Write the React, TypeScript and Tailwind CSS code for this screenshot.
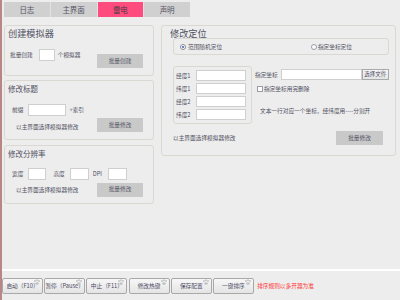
import React from "react";

const Paw = () => (
  <svg className="absolute right-[1px] top-[0px]" width="8" height="7" viewBox="0 0 8 7">
    <circle cx="2" cy="2" r="1" fill="#c4c4c4" />
    <circle cx="4" cy="1.2" r="1" fill="#c4c4c4" />
    <circle cx="6" cy="2" r="1" fill="#c4c4c4" />
    <ellipse cx="4" cy="4.6" rx="1.8" ry="1.4" fill="#c4c4c4" />
  </svg>
);

const GrayBtn = ({ label, w = "w-[46px]" }: { label: string; w?: string }) => (
  <div className={`${w} h-[14px] bg-[#c9c9c9] flex items-center justify-center text-[5.7px] text-[#555566]`}>{label}</div>
);

const Input = ({ w }: { w: string }) => (
  <div className={`${w} h-[12px] bg-white border border-[#cfcfcf]`} />
);

const Small = ({ children, className = "" }: { children: React.ReactNode; className?: string }) => (
  <span className={`text-[5.7px] leading-[8px] whitespace-nowrap ${className}`}>{children}</span>
);

const Title = ({ children, className = "" }: { children: React.ReactNode; className?: string }) => (
  <div className={`leading-[9px] mt-[3px] whitespace-nowrap ${className}`}>{children}</div>
);

const BottomBtn = ({ label }: { label: string }) => (
  <div className="relative w-[41px] h-[16px] border border-[#a9a9a9] rounded-[2px] bg-gradient-to-b from-[#f7f7f7] to-[#e4e4e4] flex items-center justify-center">
    <Paw />
    <span className="text-[5.7px] text-[#4b4b66] whitespace-nowrap">{label}</span>
  </div>
);

export default function App() {
  return (
    <div
      className="w-[400px] h-[300px] bg-[#ededed] border-l-2 border-[#b98585] flex flex-col overflow-hidden text-[#505062]"
      style={{ fontFamily: '"Noto Sans CJK SC", "Noto Sans", sans-serif' }}
    >
      {/* Tabs */}
      <div className="mt-[2px] ml-[2px] flex gap-[1px] h-[15px] w-[186px] bg-[#e2e2e2]">
        {["日志", "主界面", "雷电", "声明"].map((t) => (
          <div
            key={t}
            className={`w-[46px] h-full flex items-center justify-center text-[7.5px] ${
              t === "雷电" ? "bg-[#ff4c7e] text-[#4a3a44]" : "bg-[#d0d0d0] text-[#555566]"
            }`}
          >
            {t}
          </div>
        ))}
      </div>

      {/* Content */}
      <div className="mt-[8px] flex items-start">
        {/* Left column */}
        <div className="ml-[2px] w-[150px] flex flex-col">
          {/* G1 */}
          <div className="h-[51px] border border-[#d9d9d1] rounded-[3px] flex flex-col">
            <Title className="ml-[3px] text-[9.2px]">创建模拟器</Title>
            <div className="flex items-start">
              <div className="ml-[5px] mt-[11px] flex items-center h-[12px]">
                <Small>批量创建</Small>
                <div className="ml-[6px]">
                  <Input w="w-[16px]" />
                </div>
                <Small className="ml-[3px]">个模拟器</Small>
              </div>
              <div className="ml-auto mr-[10px] mt-[16px]">
                <GrayBtn label="批量创建" />
              </div>
            </div>
          </div>

          {/* G2 */}
          <div className="mt-[4px] h-[60px] border border-[#d9d9d1] rounded-[3px] flex flex-col">
            <Title className="ml-[3px] text-[7.5px]">修改标题</Title>
            <div className="ml-[7px] mt-[11px] flex items-center h-[12px]">
              <Small>前缀</Small>
              <div className="ml-[5px]">
                <Input w="w-[38px]" />
              </div>
              <Small className="ml-[3px]">+索引</Small>
            </div>
            <div className="mt-[2px] flex items-center h-[14px]">
              <Small className="ml-[11px] pt-[3px]">以主界面选择模拟器修改</Small>
              <div className="ml-auto mr-[10px]">
                <GrayBtn label="批量修改" />
              </div>
            </div>
          </div>

          {/* G3 */}
          <div className="mt-[5px] h-[59px] border border-[#d9d9d1] rounded-[3px] flex flex-col">
            <Title className="ml-[3px] text-[7.5px]">修改分辨率</Title>
            <div className="ml-[7px] mt-[10px] flex items-center h-[12px]">
              <Small>宽度</Small>
              <div className="ml-[5px]">
                <Input w="w-[18px]" />
              </div>
              <Small className="ml-[7px]">高度</Small>
              <div className="ml-[5px]">
                <Input w="w-[19px]" />
              </div>
              <Small className="ml-[4px]">DPI</Small>
              <div className="ml-[6px]">
                <Input w="w-[19px]" />
              </div>
            </div>
            <div className="mt-[2px] flex items-center h-[15px]">
              <Small className="ml-[11px] pt-[1px]">以主界面选择模拟器修改</Small>
              <div className="ml-auto mr-[10px]">
                <GrayBtn label="批量修改" />
              </div>
            </div>
          </div>
        </div>

        {/* Right column */}
        <div className="ml-[7px] w-[235px] h-[131px] border border-[#d9d9d1] rounded-[3px] flex flex-col">
          <Title className="ml-[8px] text-[9.2px]">修改定位</Title>
          {/* radio box */}
          <div className="ml-[11px] w-[216px] h-[17px] border border-[#d9d9d1] rounded-[3px] flex items-center">
            <div className="ml-[6px] w-[6px] h-[6px] rounded-full border border-[#8a8a9a] bg-white flex items-center justify-center">
              <div className="w-[2px] h-[2px] rounded-full bg-[#3b5bb8]" />
            </div>
            <Small className="ml-[2px]">范围随机定位</Small>
            <div className="ml-auto flex items-center mr-[36px]">
              <div className="w-[6px] h-[6px] rounded-full border border-[#9a9aa8] bg-white" />
              <Small className="ml-[1px]">指定坐标定位</Small>
            </div>
          </div>

          {/* middle */}
          <div className="mt-[11px] flex items-start">
            <div className="ml-[11px] w-[79px] h-[58px] border border-[#d9d9d1] rounded-[3px] flex flex-col gap-[2px] pt-[3px]">
              {["经度1", "纬度1", "经度2", "纬度2"].map((l) => (
                <div key={l} className="flex items-center h-[11px]">
                  <Small className="ml-[2px] w-[20px]">{l}</Small>
                  <div className="w-[50px] h-[11px] bg-white border border-[#cfcfcf]" />
                </div>
              ))}
            </div>
            <div className="ml-[3px] flex flex-col">
              <div className="mt-[3px] flex items-center h-[11px]">
                <Small>指定坐标</Small>
                <div className="ml-[3px] w-[81px] h-[11px] bg-white border border-[#cfcfcf]" />
                <div className="relative w-[27px] h-[11px] border border-[#a9a9a9] bg-gradient-to-b from-[#f7f7f7] to-[#e4e4e4] flex items-center justify-center">
                  <Paw />
                  <span className="text-[5.5px] text-[#4b4b66] whitespace-nowrap">选择文件</span>
                </div>
              </div>
              <div className="mt-[5px] flex items-center h-[7px]">
                <div className="ml-[2px] w-[6px] h-[6px] border border-[#9a9aa8] bg-white" />
                <Small className="ml-[1px]">指定坐标用完删除</Small>
              </div>
              <Small className="mt-[15px] ml-[5px]">文本一行对应一个坐标，经纬度用----分割开</Small>
            </div>
          </div>

          <div className="mt-[7px] flex items-center h-[14px]">
            <Small className="ml-[11px]">以主界面选择模拟器修改</Small>
            <div className="ml-auto mr-[12px]">
              <GrayBtn label="批量修改" w="w-[47px]" />
            </div>
          </div>
        </div>
      </div>

      {/* Bottom */}
      <div className="mt-auto flex flex-col pb-[6px]">
        <div className="h-[2px] bg-white" />
        <div className="mt-[7px] flex items-center gap-[1.2px]">
          <BottomBtn label="启动（F10）" />
          <BottomBtn label="暂停（Pause）" />
          <BottomBtn label="中止（F11）" />
          <BottomBtn label="修改热键" />
          <BottomBtn label="保存配置" />
          <BottomBtn label="一键排序" />
          <span className="ml-[2px] text-[5.7px] text-[#ff3535] whitespace-nowrap">排序规则以多开器为准</span>
        </div>
      </div>
    </div>
  );
}
